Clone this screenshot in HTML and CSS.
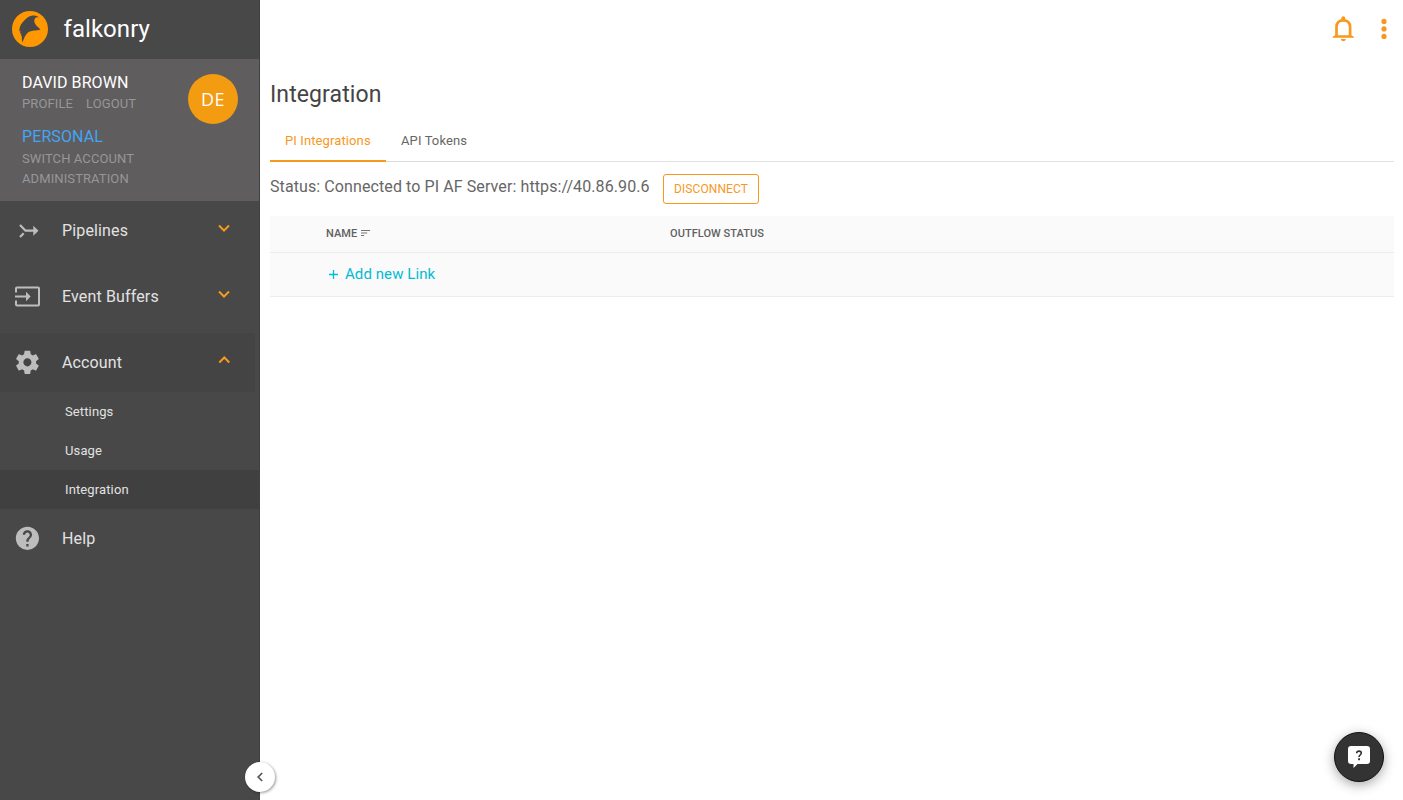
FILE: index.html
```html
<!DOCTYPE html>
<html lang="en">
<head>
<meta charset="utf-8">
<title>Falkonry - Integration</title>
<link rel="stylesheet" href="styles.css">
</head>
<body>
<div class="app">
  <aside class="sidebar">
    <div class="brand">
      <svg class="brand-logo" width="36" height="36" viewBox="0 0 36 36"><circle cx="18" cy="18" r="18" fill="#ff9800"/><path d="M27.200 7.300C26.500 4.800 23 3.900 19.500 4.700C16 5.400 14 7.600 12 9.700C9.500 12.300 8 14.500 7.500 17.500L7.300 20.500L8.500 19.800L8 23L9.300 22.200L9 25.500L10 24.800L9.800 28L10.500 31.500C12 27 13.200 24 16 21.500C19 19.200 24 19.800 28.500 18.500C26.500 16.500 24.500 15.300 23.100 12.800C21.700 10 22.300 6.800 24.700 6.200C26 6 26.800 6.600 27.200 7.300Z" fill="#484848"/></svg>
      <span class="brand-name">falkonry</span>
    </div>
    <section class="profile">
      <div class="profile-info">
        <div class="user-name">DAVID BROWN</div>
        <div class="user-links"><a>PROFILE</a><a>LOGOUT</a></div>
        <div class="account-name">PERSONAL</div>
        <a class="account-link">SWITCH ACCOUNT</a>
        <a class="account-link">ADMINISTRATION</a>
      </div>
      <div class="avatar">DE</div>
    </section>
    <nav class="menu">
      <a class="menu-item">
        <svg class="menu-icon" width="56" height="30" viewBox="0 0 56 30"><path d="M20 9L25.500 14.700H36M20 21L23.700 17.300" fill="none" stroke="#bdbdbd" stroke-width="2.200"/><path d="M33.300 9.700L38.500 14.700L33.300 19.700Z" fill="#bdbdbd"/></svg>
        <span>Pipelines</span>
        <svg class="chevron" width="14" height="10" viewBox="0 0 14 10"><path d="M2 2.500L7 7.500L12 2.500" /></svg>
      </a>
      <a class="menu-item">
        <svg class="menu-icon" width="56" height="30" viewBox="0 0 56 30"><path d="M16 10.500V6.500Q16 5.500 17 5.500H38Q39 5.500 39 6.500V22.500Q39 23.500 38 23.500H17Q16 23.500 16 22.500V18.500M15 14.500H28" fill="none" stroke="#bdbdbd" stroke-width="2"/><path d="M26 9.800L30.700 14.500L26 19.200Z" fill="#bdbdbd"/></svg>
        <span>Event Buffers</span>
        <svg class="chevron" width="14" height="10" viewBox="0 0 14 10"><path d="M2 2.500L7 7.500L12 2.500" /></svg>
      </a>
      <a class="menu-item open">
        <svg class="menu-icon" width="56" height="30" viewBox="0 0 56 30"><path transform="translate(13.500 .4) scale(1.160)" fill="#bdbdbd" d="M19.430 12.980c.04-.32.07-.64.07-.98s-.03-.66-.07-.98l2.110-1.650c.19-.15.24-.42.12-.64l-2-3.460c-.12-.22-.39-.3-.61-.22l-2.490 1c-.52-.4-1.080-.73-1.690-.98l-.38-2.650C14.460 2.180 14.250 2 14 2h-4c-.25 0-.46.18-.49.42l-.38 2.650c-.61.25-1.170.59-1.690.98l-2.490-1c-.23-.09-.49 0-.61.22l-2 3.460c-.13.22-.07.49.12.64l2.110 1.650c-.04.32-.07.65-.07.98s.03.66.07.98l-2.110 1.650c-.19.15-.24.42-.12.64l2 3.460c.12.22.39.3.61.22l2.490-1c.52.4 1.080.73 1.690.98l.38 2.650c.03.24.24.42.49.42h4c.25 0 .46-.18.49-.42l.38-2.650c.61-.25 1.170-.59 1.690-.98l2.490 1c.23.09.49 0 .61-.22l2-3.460c.12-.22.07-.49-.12-.64l-2.110-1.650zM12 15.500c-1.930 0-3.500-1.570-3.500-3.500s1.570-3.500 3.500-3.500 3.500 1.570 3.500 3.500-1.570 3.500-3.500 3.500z"/></svg>
        <span>Account</span>
        <svg class="chevron up" width="14" height="10" viewBox="0 0 14 10"><path d="M2.300 7.500L7.300 2.500L12.300 7.500" /></svg>
      </a>
      <a class="sub-item">Settings</a>
      <a class="sub-item">Usage</a>
      <a class="sub-item active">Integration</a>
      <a class="menu-item help">
        <svg class="menu-icon" width="56" height="30" viewBox="0 0 56 30"><path transform="translate(13.500 .4) scale(1.160)" fill="#bdbdbd" d="M12 2C6.480 2 2 6.480 2 12s4.480 10 10 10 10-4.480 10-10S17.520 2 12 2zm1 17h-2v-2h2v2zm2.070-7.750l-.9.920C13.450 12.900 13 13.500 13 15h-2v-.5c0-1.100.45-2.100 1.170-2.830l1.240-1.260c.37-.36.59-.86.59-1.410 0-1.100-.9-2-2-2s-2 .9-2 2H8c0-2.210 1.790-4 4-4s4 1.790 4 4c0 .88-.36 1.680-.93 2.250z"/></svg>
        <span>Help</span>
      </a>
    </nav>
    <button class="collapse" aria-label="Collapse"><svg width="30" height="30" viewBox="0 0 30 30"><path d="M17.200 11L13.200 15L17.200 19" fill="none" stroke="#555" stroke-width="1.700"/></svg></button>
  </aside>
  <main class="main">
    <header class="topbar">
      <svg width="24" height="28" viewBox="0 0 24 28"><path d="M5.500 21.500V12C5.500 7.800 8.200 5.300 12.300 5.300S19.100 7.800 19.100 12V21.500" fill="none" stroke="#f8981d" stroke-width="2.700"/><path d="M1.600 22.300Q1.600 21.300 4.300 20.200H20.300Q23 21.300 23 22.300V22.800H1.600ZM10.300 4.700V3.200Q10.300 1.300 12.300 1.300T14.300 3.200V4.700ZM9.600 24H15Q14.300 26.300 12.300 26.300T9.600 24Z" fill="#f8981d"/></svg>
      <svg width="8" height="28" viewBox="0 0 8 28"><g fill="#f8981d"><circle cx="4" cy="6.400" r="2.600"/><circle cx="4" cy="13.900" r="2.600"/><circle cx="4" cy="21.400" r="2.600"/></g></svg>
    </header>
    <h1 class="title">Integration</h1>
    <div class="tabs"><a class="tab selected">PI Integrations</a><a class="tab tokens">API Tokens</a></div>
    <div class="status"><span class="status-text">Status: Connected to PI AF Server: https://40.86.90.6</span><button class="disconnect">DISCONNECT</button></div>
    <div class="table">
      <div class="row head"><div class="cell name">NAME<svg class="sort" width="10" height="8" viewBox="0 0 10 8"><path d="M0 1.500H9M0 4H6.200M0 6.500H3.200" stroke="#757575" stroke-width="1"/></svg></div><div class="cell flow">OUTFLOW STATUS</div></div>
      <div class="row add"><svg width="10" height="10" viewBox="0 0 10 10"><path d="M0 4.500H9M4.500 0V9" stroke="#00bcd4" stroke-width="1.300"/></svg><a class="add-link">Add new Link</a></div>
    </div>
  </main>
  <button class="help-fab" aria-label="Help"><svg width="24" height="24" viewBox="0 0 24 24"><path d="M4 1H20Q23 1 23 4V16Q23 19 20 19H10.500L6.500 23V19H4Q1 19 1 16V4Q1 1 4 1Z" fill="#fff"/><path d="M9.700 8.200C9.800 6.800 10.700 6.100 12 6.100C13.400 6.100 14.300 6.900 14.300 8.100C14.300 10 12 10 12 12" fill="none" stroke="#333" stroke-width="1.600"/><rect x="11.100" y="13.300" width="1.900" height="1.900" fill="#333"/></svg></button>
</div>
</body>
</html>
```
FILE: styles.css
```css
* { box-sizing: border-box; }
body { margin: 0; font-family: Roboto, sans-serif; background: #fff; color: #444; }
button { font-family: inherit; padding: 0; margin: 0; }
svg { display: block; flex: none; }
.app { display: flex; width: 100%; height: 800px; position: relative; overflow: hidden; }
.sidebar { width: 260px; flex: none; background: #484848; border-right: 1px solid #414141; position: relative; z-index: 1; }
.brand { height: 59px; display: flex; align-items: center; padding: 0 0 1px 12px; gap: 15.500px; }
.brand-name { color: #fff; font-size: 24px; letter-spacing: .05px; line-height: 32px; }
.profile { height: 142px; background: #5f5d5e; display: flex; justify-content: space-between; padding: 14px 21px 0 22px; }
.profile-info { white-space: nowrap; }
.user-name { color: #fff; font-size: 16px; line-height: 20px; letter-spacing: .08px; }
.user-links { display: flex; gap: 13px; color: #979797; font-size: 13px; line-height: 20px; padding-top: 1px; letter-spacing: .1px; }
.account-name { color: #42a5f5; font-size: 16px; line-height: 20px; margin: 13px 0 2px; letter-spacing: .1px; }
.account-link { display: block; color: #979797; font-size: 13px; line-height: 20px; letter-spacing: .1px; }
.avatar { width: 50px; height: 50px; margin-top: 1px; border-radius: 50%; background: #f39c12; color: #fff; font-family: "Open Sans", Roboto, sans-serif; font-size: 18px; line-height: 50px; letter-spacing: .4px; text-align: center; }
.menu-item { display: flex; align-items: center; height: 66px; color: #e2e2e2; font-size: 16px; letter-spacing: .14px; padding-bottom: 7px; }
.menu-icon { margin-right: 6px; }
.chevron { margin: 0 28px 5px auto; }
.chevron path { fill: none; stroke: #f8981d; stroke-width: 2; }
.menu-item.open { height: 59px; padding-bottom: 0; background: #444; margin-right: 4px; }
.chevron.up { margin-right: 24px; margin-bottom: 6px; }
.sub-item { display: block; height: 39px; line-height: 39px; padding-left: 65px; color: #e2e2e2; font-size: 13px; letter-spacing: .12px; }
.sub-item.active { background: #404040; }
.menu-item.help { height: 59px; padding-bottom: 0; }
.collapse { position: absolute; left: 245px; top: 762px; width: 30px; height: 30px; border: 0; border-radius: 50%; background: #fff; box-shadow: 1px 1px 3px rgba(0,0,0,.4); }
.main { flex: 1; padding: 0 9px 0 10px; min-width: 0; }
.topbar { height: 59px; display: flex; justify-content: flex-end; align-items: flex-start; gap: 25px; padding: 15px 6px 0 0; }
.title { margin: 20px 0 0; font-size: 23px; line-height: 31px; font-weight: 400; letter-spacing: .1px; color: #444; }
.tabs { display: flex; height: 52px; border-bottom: 1px solid #e2e2e2; }
.tab { height: 52px; line-height: 62px; font-size: 13px; letter-spacing: .11px; padding: 0 15px; color: #666; border-bottom: 1px solid #dadada; white-space: nowrap; }
.tab.selected { width: 116px; color: #f8981d; border-bottom: 2px solid #f8981d; }
.tab.tokens { width: 95px; }
.status { height: 54px; display: flex; align-items: flex-start; padding-top: 12px; }
.status-text { width: 393px; font-size: 16px; line-height: 25px; color: #666; white-space: nowrap; letter-spacing: .095px; }
.disconnect { width: 96px; height: 30px; border: 1px solid #f8981d; border-radius: 3px; background: #fff; color: #f8981d; font-size: 12px; letter-spacing: .08px; }
.table { background: #fafafa; }
.row { display: flex; align-items: center; border-bottom: 1px solid #ececec; }
.head { height: 37px; padding: 0 0 2px 56px; font-size: 11px; font-weight: 500; color: #616161; letter-spacing: .06px; }
.name { width: 344px; display: flex; align-items: center; gap: 4px; }
.add { height: 44px; padding-left: 59px; gap: 6px; color: #00bcd4; font-size: 15px; letter-spacing: .08px; }
.add-link { padding-bottom: 2px; }
.help-fab { position: absolute; left: 1334px; top: 732px; width: 50px; height: 50px; display: flex; align-items: center; justify-content: center; border: 1px solid #111; border-radius: 50%; background: #333; box-shadow: 0 3px 12px rgba(0,0,0,.35); }
```
